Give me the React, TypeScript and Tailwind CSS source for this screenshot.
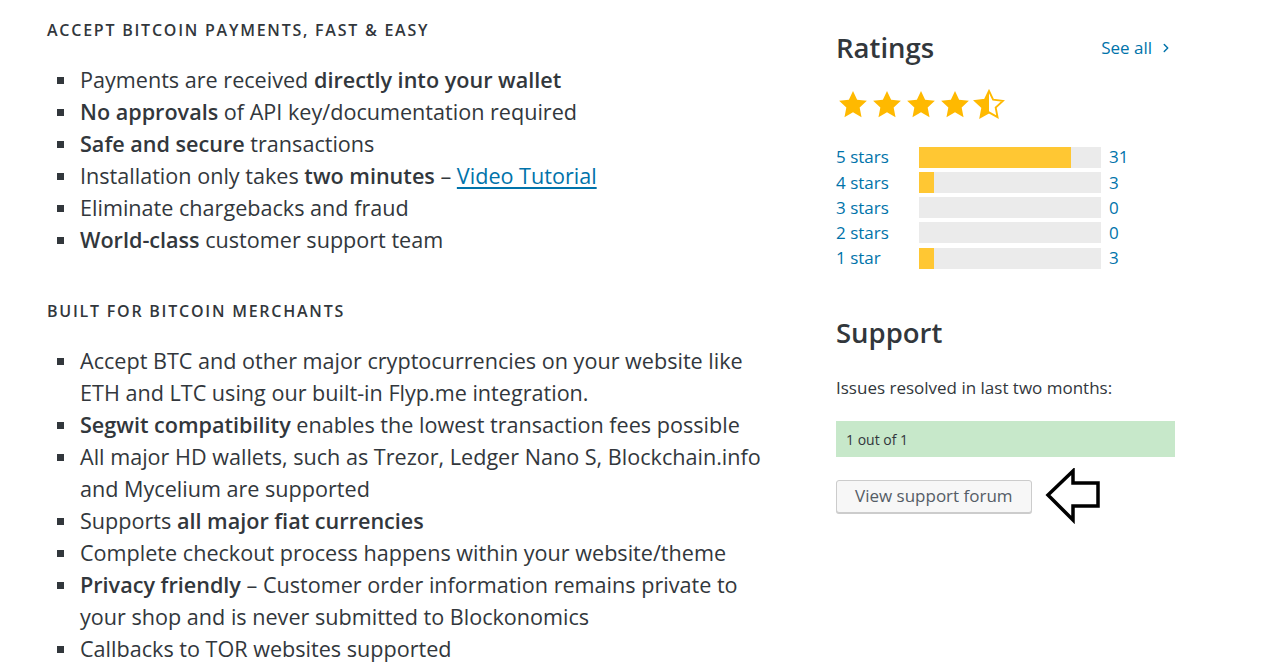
import { ChevronRight } from "lucide-react";

const features1 = [
  <>Payments are received <b className="font-semibold">directly into your wallet</b></>,
  <><b className="font-semibold">No approvals</b> of API key/documentation required</>,
  <><b className="font-semibold">Safe and secure</b> transactions</>,
  <>
    Installation only takes <b className="font-semibold">two minutes</b> –{" "}
    <a href="#" className="text-[#0073aa] underline underline-offset-[3px]">Video Tutorial</a>
  </>,
  <>Eliminate chargebacks and fraud</>,
  <><b className="font-semibold">World-class</b> customer support team</>,
];

const features2 = [
  <>Accept BTC and other major cryptocurrencies on your website like ETH and LTC using our built-in Flyp.me integration.</>,
  <><b className="font-semibold">Segwit compatibility</b> enables the lowest transaction fees possible</>,
  <>All major HD wallets, such as Trezor, Ledger Nano S, Blockchain.info and Mycelium are supported</>,
  <>Supports <b className="font-semibold">all major fiat currencies</b></>,
  <>Complete checkout process happens within your website/theme</>,
  <><b className="font-semibold">Privacy friendly</b> – Customer order information remains private to your shop and is never submitted to Blockonomics</>,
  <>Callbacks to TOR websites supported</>,
];

const ratings = [
  { label: "5 stars", count: 31 },
  { label: "4 stars", count: 3 },
  { label: "3 stars", count: 0 },
  { label: "2 stars", count: 0 },
  { label: "1 star", count: 3 },
];

const STAR = "12,1.5 15.1,8 22.4,8.9 17,13.9 18.4,21.1 12,17.5 5.6,21.1 7,13.9 1.6,8.9 8.9,8";

const Star = ({ half }: { half?: boolean }) => (
  <svg viewBox="0 0 24 24" className="w-[34px] h-[32px]">
    {half ? (
      <>
        <defs>
          <clipPath id="lefthalf">
            <rect x="0" y="0" width="12" height="24" />
          </clipPath>
        </defs>
        <polygon points={STAR} fill="#ffb900" clipPath="url(#lefthalf)" />
        <polygon points={STAR} fill="none" stroke="#ffb900" strokeWidth="1.4" strokeLinejoin="miter" />
      </>
    ) : (
      <polygon points={STAR} fill="#ffb900" />
    )}
  </svg>
);

const Bullets = ({ items }: { items: React.ReactNode[] }) => (
  <ul className="text-[21.6px] leading-[32px]">
    {items.map((item, i) => (
      <li key={i} className="flex">
        <span className="w-[7px] h-[7px] bg-[#32373c] mt-[13px] ml-[10px] mr-[16px] shrink-0" />
        <span>{item}</span>
      </li>
    ))}
  </ul>
);

const App = () => {
  const total = 37;
  return (
    <div className="min-h-screen bg-white text-[#32373c] font-['Open_Sans',sans-serif] flex">
      <div className="pl-[47px] w-[836px] shrink-0 pt-[20px]">
        <h3 className="text-[16px] leading-[20px] font-semibold tracking-[0.11em] uppercase mb-[24px]">
          Accept Bitcoin Payments, Fast &amp; Easy
        </h3>
        <Bullets items={features1} />
        <h3 className="text-[16px] leading-[20px] font-semibold tracking-[0.11em] uppercase mt-[45px] mb-[24px]">
          Built for Bitcoin Merchants
        </h3>
        <div className="w-[725px]">
          <Bullets items={features2} />
        </div>
      </div>

      <div className="w-[339px] shrink-0 pt-[30px]">
        <div className="flex items-center justify-between h-[36px]">
          <h2 className="text-[27.5px] leading-[36px] font-semibold">Ratings</h2>
          <a href="#" className="text-[#0073aa] text-[17px] flex items-center gap-[7px] mr-[2px]">
            See all <ChevronRight className="w-[14px] h-[14px]" strokeWidth={2.5} />
          </a>
        </div>

        <div className="flex mt-[23px] h-[32px]">
          <Star />
          <Star />
          <Star />
          <Star />
          <Star half />
        </div>

        <div className="mt-[25px] flex flex-col gap-[3.25px]">
          {ratings.map((r) => (
            <div key={r.label} className="flex items-center h-[22px] text-[17px] text-[#0073aa]">
              <span className="w-[83px]">{r.label}</span>
              <div className="w-[182px] h-[21px] bg-[#ebebeb]">
                <div className="h-full bg-[#ffc733]" style={{ width: `${(r.count / total) * 100}%` }} />
              </div>
              <span className="ml-[8px]">{r.count}</span>
            </div>
          ))}
        </div>

        <h2 className="text-[27.5px] leading-[36px] font-semibold mt-[46px]">Support</h2>
        <p className="text-[17px] leading-[24px] mt-[25px]">Issues resolved in last two months:</p>
        <div className="mt-[21px] h-[36px] bg-[#c7e8ca] flex items-center px-[10px] text-[14px]">
          1 out of 1
        </div>

        <div className="mt-[11px] flex items-center gap-[13px]">
          <button className="h-[33px] px-[18px] text-[17px] text-[#555d66] bg-[#f7f7f7] border border-[#cccccc] rounded-[3px] shadow-[0_1px_0_#cccccc]">
            View support forum
          </button>
          <svg width="58" height="56" viewBox="0 0 58 56">
            <polygon
              points="3,27 28,3 28,15 53,15 53,38 28,38 28,52"
              fill="none"
              stroke="#000"
              strokeWidth="3.5"
              strokeLinejoin="miter"
            />
          </svg>
        </div>
      </div>
    </div>
  );
};

export default App;
